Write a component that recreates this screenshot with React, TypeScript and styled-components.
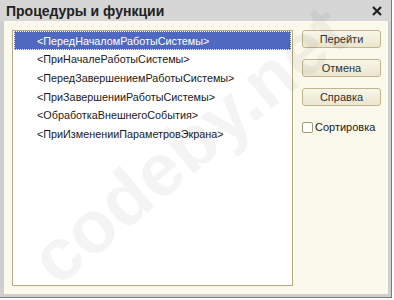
import React from 'react';
import styled, { createGlobalStyle } from 'styled-components';

const GlobalStyle = createGlobalStyle`
  html, body {
    margin: 0;
    padding: 0;
    background: #ffffff;
  }
  * {
    box-sizing: border-box;
  }
`;

const Window = styled.div`
  position: relative;
  width: 392px;
  height: 298px;
  background: #cfcfcf;
  border-right: 1px solid #7c7c7c;
  border-bottom: 1px solid #7c7c7c;
  display: flex;
  flex-direction: column;
  overflow: hidden;
  font-family: 'Liberation Sans', Arial, sans-serif;
`;

const TitleBar = styled.div`
  height: 21px;
  flex: none;
  display: flex;
  align-items: center;
  justify-content: space-between;
  padding: 1px 9px 0 6px;
  background: #d6d6d6;
`;

const Title = styled.span`
  font-size: 14px;
  font-weight: bold;
  color: #222;
`;

const CloseIcon = styled.svg`
  width: 10px;
  height: 10px;
  display: block;
`;

const Body = styled.div`
  flex: 1;
  margin: 0 3px 3px 4px;
  background: #fbf9ec;
  display: flex;
  gap: 9px;
  padding: 9px 0 8px 8px;
`;

const ListBox = styled.div`
  width: 281px;
  background: #ffffff;
  border: 1px solid #b3ab82;
  padding: 0 1px;
`;

const Row = styled.div<{ $selected?: boolean }>`
  height: 18.6px;
  display: flex;
  align-items: center;
  padding: 1px 0 0 23px;
  font-size: 10.8px;
  color: ${(p) => (p.$selected ? '#ffffff' : '#1a1a1a')};
  background: ${(p) => (p.$selected ? '#4f69c0' : 'transparent')};
  outline: ${(p) => (p.$selected ? '1px dotted #ffffff' : 'none')};
  outline-offset: -1px;
  white-space: nowrap;
`;

const Side = styled.div`
  display: flex;
  flex-direction: column;
  gap: 11px;
`;

const Button = styled.div`
  width: 79px;
  height: 18px;
  border: 1px solid #bfb48a;
  border-radius: 3px;
  background: linear-gradient(#f8f6ea, #ebe6cf);
  display: flex;
  align-items: center;
  justify-content: center;
  font-size: 11px;
  color: #333;
`;

const CheckRow = styled.label`
  display: flex;
  align-items: center;
  gap: 2px;
  margin-top: 4px;
  font-size: 11px;
  color: #1a1a1a;
`;

const CheckBox = styled.span`
  width: 11px;
  height: 11px;
  border: 1px solid #a29a72;
  border-radius: 2px;
  background: #ffffff;
`;

const Watermark = styled.div`
  position: absolute;
  left: 14px;
  top: 236px;
  font-size: 74px;
  font-weight: bold;
  font-family: 'Liberation Sans', Arial, sans-serif;
  color: rgba(0, 0, 0, 0.045);
  transform: rotate(-40deg);
  transform-origin: left top;
  white-space: nowrap;
  pointer-events: none;
`;

const items = [
  '<ПередНачаломРаботыСистемы>',
  '<ПриНачалеРаботыСистемы>',
  '<ПередЗавершениемРаботыСистемы>',
  '<ПриЗавершенииРаботыСистемы>',
  '<ОбработкаВнешнегоСобытия>',
  '<ПриИзмененииПараметровЭкрана>',
];

export default function App() {
  return (
    <>
      <GlobalStyle />
      <Window>
        <TitleBar>
          <Title>Процедуры и функции</Title>
          <CloseIcon viewBox="0 0 10 10">
            <path d="M1 1 L9 9 M9 1 L1 9" stroke="#222" strokeWidth="2.2" />
          </CloseIcon>
        </TitleBar>
        <Body>
          <ListBox>
            {items.map((it, i) => (
              <Row key={it} $selected={i === 0}>
                {it}
              </Row>
            ))}
          </ListBox>
          <Side>
            <Button>Перейти</Button>
            <Button>Отмена</Button>
            <Button>Справка</Button>
            <CheckRow>
              <CheckBox />
              Сортировка
            </CheckRow>
          </Side>
        </Body>
        <Watermark>codeby.net</Watermark>
      </Window>
    </>
  );
}
